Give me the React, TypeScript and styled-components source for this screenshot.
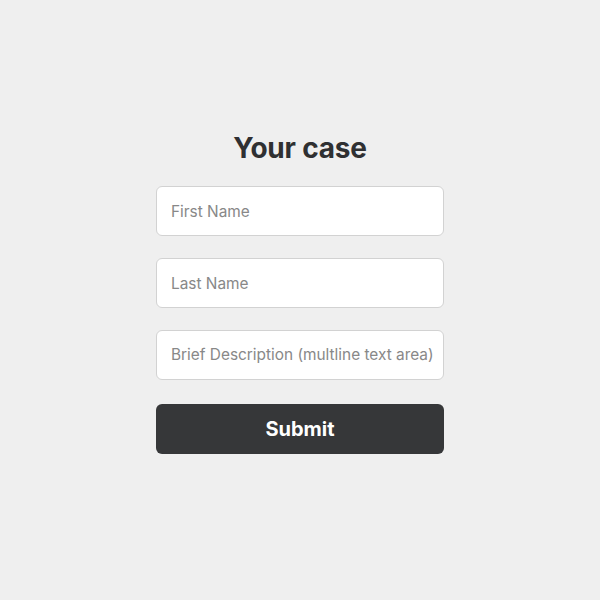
import React from "react";
import styled, { createGlobalStyle } from "styled-components";

const GlobalStyle = createGlobalStyle`
  html, body {
    margin: 0;
    padding: 0;
    background: #efefef;
    font-family: Inter, "Noto Sans", "Liberation Sans", sans-serif;
  }
`;

const Page = styled.div`
  height: 600px;
  display: flex;
  justify-content: center;
  padding-top: 130px;
  box-sizing: border-box;
`;

const Form = styled.form`
  width: 288px;
  display: flex;
  flex-direction: column;
`;

const Title = styled.h1`
  margin: 0 0 20px;
  font-size: 28px;
  line-height: 36px;
  font-weight: 700;
  color: #2f3032;
  text-align: center;
  letter-spacing: -0.2px;
`;

const fieldStyle = `
  box-sizing: border-box;
  width: 100%;
  height: 50px;
  border: 1.5px solid #d2d2d2;
  border-radius: 6px;
  background: #ffffff;
  padding: 0 14px;
  font-family: Inter, "Noto Sans", "Liberation Sans", sans-serif;
  font-size: 15.4px;
  color: #333;
  outline: none;
  &::placeholder {
    color: #888888;
  }
`;

const Input = styled.input`
  ${fieldStyle}
  margin-bottom: 22px;
`;

const TextArea = styled.textarea`
  ${fieldStyle}
  display: block;
  resize: none;
  padding: 14px 2px 0 14px;
  line-height: 20px;
  overflow: hidden;
  white-space: nowrap;
  margin-bottom: 24px;
`;

const SubmitButton = styled.button`
  height: 50px;
  border: none;
  border-radius: 6px;
  background: #363739;
  color: #ffffff;
  font-family: Inter, "Noto Sans", "Liberation Sans", sans-serif;
  font-size: 20px;
  font-weight: 700;
  cursor: pointer;
`;

export default function App() {
  return (
    <>
      <GlobalStyle />
      <Page>
        <Form onSubmit={(e) => e.preventDefault()}>
          <Title>Your case</Title>
          <Input placeholder="First Name" />
          <Input placeholder="Last Name" />
          <TextArea placeholder="Brief Description (multline text area)" rows={1} />
          <SubmitButton type="submit">Submit</SubmitButton>
        </Form>
      </Page>
    </>
  );
}
